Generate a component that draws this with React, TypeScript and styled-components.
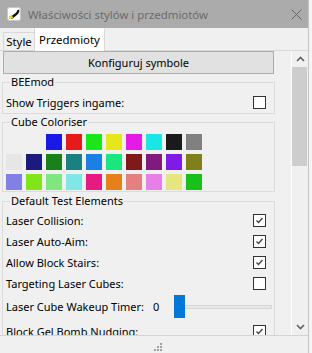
import React from 'react';
import styled, { createGlobalStyle } from 'styled-components';

const GlobalStyle = createGlobalStyle`
  html, body {
    margin: 0;
    padding: 0;
    background: #f4f4f4;
  }
  body {
    font-family: "Noto Sans", "Segoe UI", sans-serif;
    font-size: 11px;
    color: #000;
  }
`;

const Window = styled.div`
  width: 309px;
  height: 353px;
  box-sizing: border-box;
  border-right: 1px solid #c4c4c4;
  background: #f0f0f0;
  display: flex;
  flex-direction: column;
  overflow: hidden;
`;

const TitleBar = styled.div`
  height: 28px;
  flex: none;
  background: #ababab;
  display: flex;
  align-items: center;
  padding-left: 7px;
`;

const TitleText = styled.div`
  margin-left: 7px;
  color: #6b6b6b;
  font-size: 11.4px;
  white-space: nowrap;
`;

const CloseBtn = styled.div`
  margin-left: auto;
  margin-right: 6px;
  width: 11px;
  height: 11px;
  display: flex;
`;

const TabRow = styled.div`
  height: 22px;
  flex: none;
  display: flex;
  align-items: flex-end;
  padding-left: 3px;
  position: relative;
  z-index: 1;
`;

const Tab = styled.div<{ $active?: boolean; $width: number }>`
  box-sizing: border-box;
  width: ${(p) => p.$width}px;
  height: ${(p) => (p.$active ? 23 : 18)}px;
  margin-bottom: ${(p) => (p.$active ? -1 : 0)}px;
  margin-left: ${(p) => (p.$active ? -1 : 0)}px;
  padding-bottom: ${(p) => (p.$active ? 2 : 0)}px;
  background: ${(p) => (p.$active ? '#fff' : '#f0f0f0')};
  border: 1px solid #d9d9d9;
  border-bottom: none;
  border-top-color: ${(p) => (p.$active ? '#fff' : '#d9d9d9')};
  display: flex;
  align-items: center;
  justify-content: center;
  font-size: 11.4px;
  white-space: nowrap;
`;

const Body = styled.div`
  flex: none;
  height: 286px;
  box-sizing: border-box;
  display: flex;
  border-top: 1px solid #d9d9d9;
  border-bottom: 1px solid #d4d4d4;
`;

const ScrollArea = styled.div`
  width: 291px;
  flex: none;
  overflow: hidden;
  padding-left: 2px;
  box-sizing: border-box;
`;

const Button = styled.div`
  box-sizing: border-box;
  width: 271px;
  height: 23px;
  margin-left: 1px;
  background: #e1e1e1;
  border: 1px solid #adadad;
  display: flex;
  align-items: center;
  justify-content: center;
`;

const Group = styled.fieldset<{ $pt: number; $pb: number; $mt?: number }>`
  box-sizing: border-box;
  width: 273px;
  min-width: 0;
  margin: ${(p) => p.$mt ?? 0}px 0 0 0;
  padding: ${(p) => p.$pt}px 8px ${(p) => p.$pb}px 3px;
  border: 1px solid #dcdcdc;
`;

const Legend = styled.legend`
  padding: 0 1px;
  margin-left: 4px;
  line-height: 16px;
  font-size: 11px;
`;

const Row = styled.div<{ $h?: number }>`
  height: ${(p) => p.$h ?? 21}px;
  display: flex;
  align-items: center;
  justify-content: space-between;
  white-space: nowrap;
`;

const SliderRow = styled.div`
  height: 27px;
  display: grid;
  grid-template-columns: 147px 21px 98px;
  align-items: start;
  line-height: 25px;
  white-space: nowrap;
`;

const Box = styled.span`
  box-sizing: border-box;
  width: 13px;
  height: 13px;
  border: 1px solid #333;
  background: #fff;
  display: flex;
  flex: none;
`;

const Slider = styled.div`
  height: 23px;
  margin-top: 1px;
  display: flex;
  align-items: center;
  position: relative;
`;

const Track = styled.div`
  flex: 1;
  height: 4px;
  box-sizing: border-box;
  border: 1px solid #d6d6d6;
  background: #e7e7e7;
`;

const Thumb = styled.div`
  position: absolute;
  left: 0;
  top: 0;
  width: 11px;
  height: 23px;
  background: #0078d7;
`;

const Swatches = styled.div`
  display: grid;
  grid-template-columns: repeat(10, 16px);
  grid-auto-rows: 16px;
  gap: 4px;
`;

const Swatch = styled.div<{ $c: string }>`
  background: ${(p) => p.$c};
`;

const Scrollbar = styled.div`
  width: 17px;
  flex: none;
  border-left: 1px solid #fff;
  display: flex;
  flex-direction: column;
`;

const Arrow = styled.div`
  height: 16px;
  flex: none;
  display: flex;
  align-items: center;
  justify-content: center;
`;

const ScrollThumb = styled.div`
  width: 15px;
  height: 99px;
  background: #cdcdcd;
`;

const Spacer = styled.div`
  flex: 1;
`;

const Footer = styled.div`
  flex: 1;
  display: flex;
  align-items: center;
  justify-content: center;
  padding-left: 8px;
  padding-top: 4px;
`;

const CheckBox = ({ checked }: { checked?: boolean }) => (
  <Box>
    {checked && (
      <svg width="11" height="11" viewBox="0 0 11 11">
        <path d="M2.5 5.5 L4.5 7.5 L8.5 3" fill="none" stroke="#444" strokeWidth="1.4" />
      </svg>
    )}
  </Box>
);

const colours = [
  '', '', '#1a1ae6', '#e61a1a', '#1ae61a', '#e6e61a', '#e61ae6', '#1ae6e6', '#1a1a1a', '#808080',
  '#e6e6e6', '#1a1a80', '#1a801a', '#1a8080', '#1a80e6', '#1ae680', '#801a1a', '#801a80', '#801ae6', '#80801a',
  '#8080e6', '#80e61a', '#80e680', '#80e6e6', '#e61a80', '#e6801a', '#e68080', '#e680e6', '#e6e680', '#1ac01a',
];

const testElements = [
  { label: 'Laser Collision:', checked: true },
  { label: 'Laser Auto-Aim:', checked: true },
  { label: 'Allow Block Stairs:', checked: true },
  { label: 'Targeting Laser Cubes:', checked: false },
];

const App = () => {
  return (
    <>
      <GlobalStyle />
      <Window>
        <TitleBar>
          <svg width="14" height="14" viewBox="0 0 14 14">
            <rect x="0.5" y="0.5" width="13" height="13" rx="2" fill="#fff" stroke="#c8c8c8" />
            <path d="M11 3 Q12 5 8 8 L4 11" fill="none" stroke="#111" strokeWidth="2.4" />
            <path d="M2 9 L5 8 L6 11 L2 12 Z" fill="#f2d21b" />
          </svg>
          <TitleText>Właściwości stylów i przedmiotów</TitleText>
          <CloseBtn>
            <svg width="11" height="11" viewBox="0 0 11 11">
              <path d="M0.5 0.5 L10.5 10.5 M10.5 0.5 L0.5 10.5" stroke="#666" strokeWidth="1" />
            </svg>
          </CloseBtn>
        </TitleBar>
        <TabRow>
          <Tab $width={32}>Style</Tab>
          <Tab $width={71} $active>Przedmioty</Tab>
        </TabRow>
        <Body>
          <ScrollArea>
            <Button>Konfiguruj symbole</Button>
            <Group $pt={2} $pb={0}>
              <Legend>BEEmod</Legend>
              <Row>
                <span>Show Triggers ingame:</span>
                <CheckBox />
              </Row>
            </Group>
            <Group $pt={4} $pb={1}>
              <Legend>Cube Coloriser</Legend>
              <Swatches>
                {colours.map((c, i) => (c ? <Swatch key={i} $c={c} /> : <span key={i} />))}
              </Swatches>
            </Group>
            <Group $pt={1} $pb={0} $mt={1}>
              <Legend>Default Test Elements</Legend>
              {testElements.map((t) => (
                <Row key={t.label}>
                  <span>{t.label}</span>
                  <CheckBox checked={t.checked} />
                </Row>
              ))}
              <SliderRow>
                <span>Laser Cube Wakeup Timer:</span>
                <span>0</span>
                <Slider>
                  <Track />
                  <Thumb />
                </Slider>
              </SliderRow>
              <Row>
                <span>Block Gel Bomb Nudging:</span>
                <CheckBox checked />
              </Row>
            </Group>
          </ScrollArea>
          <Scrollbar>
            <Arrow>
              <svg width="9" height="6" viewBox="0 0 9 6">
                <path d="M1 5 L4.5 1.5 L8 5" fill="none" stroke="#606060" strokeWidth="1.6" />
              </svg>
            </Arrow>
            <ScrollThumb />
            <Spacer />
            <Arrow>
              <svg width="9" height="6" viewBox="0 0 9 6">
                <path d="M1 1 L4.5 4.5 L8 1" fill="none" stroke="#606060" strokeWidth="1.6" />
              </svg>
            </Arrow>
          </Scrollbar>
        </Body>
        <Footer>
          <svg width="8" height="8" viewBox="0 0 8 8">
            <g fill="#a0a0a0">
              <rect x="6" y="0" width="2" height="2" />
              <rect x="3" y="3" width="2" height="2" />
              <rect x="6" y="3" width="2" height="2" />
              <rect x="0" y="6" width="2" height="2" />
              <rect x="3" y="6" width="2" height="2" />
              <rect x="6" y="6" width="2" height="2" />
            </g>
          </svg>
        </Footer>
      </Window>
    </>
  );
};

export default App;
